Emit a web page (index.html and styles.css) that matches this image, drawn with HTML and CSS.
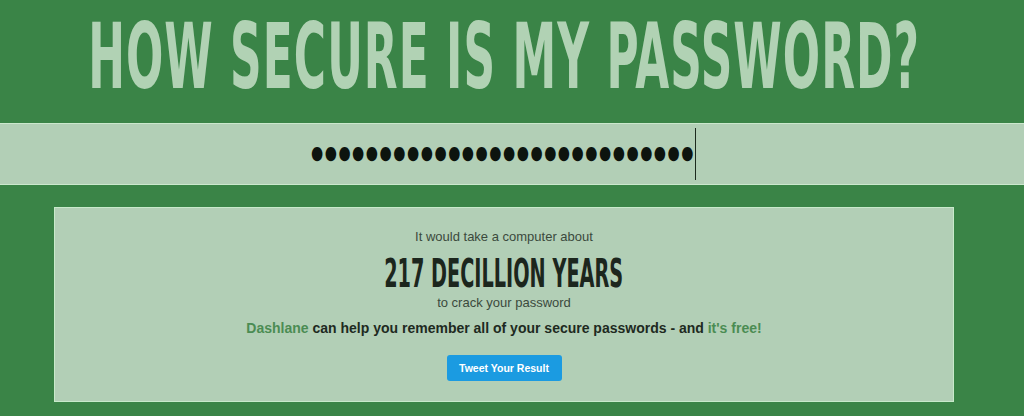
FILE: index.html
```html
<!DOCTYPE html>
<html>
<head>
<meta charset="utf-8">
<link rel="stylesheet" href="styles.css">
</head>
<body>
<header class="title-wrap">
  <h1 class="title">HOW SECURE IS MY PASSWORD?</h1>
</header>
<div class="pw-band">
  <span class="pw-dots">●●●●●●●●●●●●●●●●●●●●●●●●●●●●</span><span class="caret"></span>
</div>
<section class="result">
  <p class="lead">It would take a computer about</p>
  <div class="time-wrap"><span class="time">217 DECILLION YEARS</span></div>
  <p class="lead tail">to crack your password</p>
  <p class="promo"><span class="green">Dashlane</span> can help you remember all of your secure passwords - and <span class="green">it's free!</span></p>
  <button class="tweet">Tweet Your Result</button>
</section>
</body>
</html>
```
FILE: styles.css
```css
html, body {
  margin: 0;
  padding: 0;
}
body {
  background: #3a8447;
  width: 1024px;
  height: 416px;
  overflow: hidden;
  font-family: "Liberation Sans", Arial, sans-serif;
}
.title-wrap {
  height: 105px;
  display: flex;
  justify-content: center;
  padding-top: 11px;
  padding-right: 15px;
  box-sizing: border-box;
}
.title {
  margin: 0;
  font-family: "DejaVu Sans Condensed", "DejaVu Sans", sans-serif;
  font-weight: bold;
  font-size: 91px;
  line-height: 91px;
  color: #b1d2b4;
  white-space: nowrap;
  transform: scaleX(0.536);
  transform-origin: center top;
  letter-spacing: 2px;
}
.pw-band {
  margin-top: 18px;
  height: 62px;
  box-sizing: border-box;
  background: #b2cfb6;
  border-top: 1px solid #cbe8cd;
  border-bottom: 1px solid #cbe8cd;
  display: flex;
  justify-content: center;
  align-items: center;
  padding-right: 17px;
}
.pw-dots {
  font-family: "DejaVu Sans", sans-serif;
  font-size: 14px;
  color: #0d140e;
  letter-spacing: 1.5px;
  transform: scaleY(1.35);
  display: inline-block;
  position: relative;
  top: -2px;
}
.caret {
  display: inline-block;
  width: 1px;
  height: 52px;
  background: #1c2a1d;
  margin-left: 0;
}
.result {
  margin: 22px 0 0 54px;
  width: 900px;
  height: 195px;
  box-sizing: border-box;
  background: #b2cfb6;
  border: 1px solid #c8eacb;
  text-align: center;
  padding-top: 21px;
}
.lead {
  margin: 0;
  font-size: 13px;
  line-height: 16px;
  color: #3b4a3d;
}
.time-wrap {
  height: 38px;
  padding-top: 10px;
  display: flex;
  justify-content: center;
  align-items: center;
}
.time {
  font-family: "DejaVu Sans Condensed", "DejaVu Sans", sans-serif;
  font-weight: bold;
  font-size: 39px;
  line-height: 38px;
  color: #1c261d;
  white-space: nowrap;
  display: inline-block;
  transform: scaleX(0.549);
}
.tail {
  margin-top: 2px;
}
.promo {
  margin: 8px 0 0;
  font-size: 14px;
  line-height: 18px;
  font-weight: bold;
  color: #1e2a1f;
}
.green {
  color: #4b8c53;
}
.tweet {
  margin-top: 18px;
  width: 115px;
  height: 26px;
  border: none;
  border-radius: 3px;
  background: #1b9be1;
  color: #ffffff;
  font-family: "Liberation Sans", Arial, sans-serif;
  font-weight: bold;
  font-size: 10.5px;
  padding: 0;
  cursor: pointer;
}
```
